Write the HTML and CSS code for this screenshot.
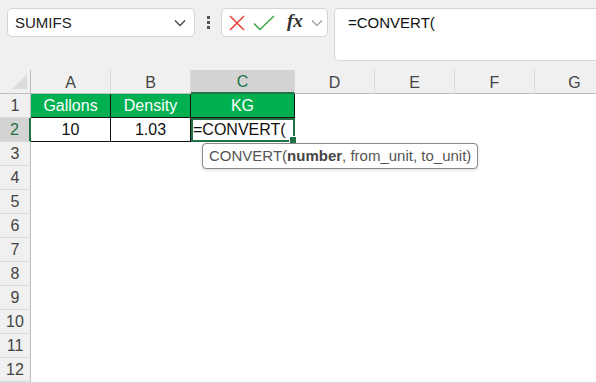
FILE: index.html
```html
<!DOCTYPE html>
<html lang="en">
<head>
  <meta charset="UTF-8">
  <title>CONVERT</title>
  <link rel="stylesheet" href="styles.css">
</head>
<body>

<header class="bar">
  <div class="namebox">
    <span>SUMIFS</span>
    <svg class="chev" width="12" height="8" viewBox="0 0 12 8"><path d="M1 1.5l5 5 5-5" fill="none" stroke="#444" stroke-width="1.3"/></svg>
  </div>
  <div class="dots"><i></i><i></i><i></i></div>
  <div class="fxbox">
    <svg width="16" height="16" viewBox="0 0 16 16"><path d="M1 1l14 14M15 1L1 15" stroke="#e8453c" stroke-width="1.6" fill="none"/></svg>
    <svg width="22" height="16" viewBox="0 0 22 16"><path d="M1 8.5l6 6L21 1" stroke="#3ea84a" stroke-width="1.6" fill="none"/></svg>
    <span class="fx">fx</span>
    <svg width="12" height="8" viewBox="0 0 12 8"><path d="M1 1.5l5 5 5-5" fill="none" stroke="#999" stroke-width="1.2"/></svg>
  </div>
  <div class="formula">=CONVERT(</div>
</header>

<section class="sheet">
  <div class="corner"><span></span></div>
  <div class="colh">A</div>
  <div class="colh">B</div>
  <div class="colh active">C</div>
  <div class="colh">D</div>
  <div class="colh">E</div>
  <div class="colh">F</div>
  <div class="colh">G</div>

  <div class="rowh">1</div>
  <div class="cell head">Gallons</div>
  <div class="cell head">Density</div>
  <div class="cell head">KG</div>
  <div class="cell"></div><div class="cell"></div><div class="cell"></div><div class="cell"></div>

  <div class="rowh active">2</div>
  <div class="cell data">10</div>
  <div class="cell data">1.03</div>
  <div class="cell sel">=CONVERT(
    <div class="tip">CONVERT(<b>number</b>, from_unit, to_unit)</div>
  </div>
  <div class="cell"></div><div class="cell"></div><div class="cell"></div><div class="cell"></div>
</section>

<script>
  // fill remaining empty rows
  const sheet = document.querySelector('.sheet');
  for (let r = 3; r <= 12; r++) {
    const h = document.createElement('div');
    h.className = 'rowh';
    h.textContent = r;
    sheet.appendChild(h);
    for (let c = 0; c < 7; c++) {
      const d = document.createElement('div');
      d.className = 'cell';
      sheet.appendChild(d);
    }
  }
</script>

</body>
</html>
```

FILE: styles.css
```css
* { box-sizing: border-box; }
body { margin: 0; font-family: "Liberation Sans", Arial, sans-serif; background: #fff; overflow: hidden; }

.bar { background: #f0f0f0; height: 70px; display: flex; align-items: flex-start; padding: 8px 0 0 7px; }
.namebox {
  width: 188px; height: 29px; background: #fff; border: 1px solid #d4d4d4; border-radius: 5px;
  display: flex; align-items: center; justify-content: space-between; padding: 0 8px 0 7px;
  font-size: 15px; color: #222;
}
.dots { width: 26px; height: 29px; display: flex; flex-direction: column; align-items: center; justify-content: center; gap: 2px; }
.dots i { width: 3px; height: 3px; background: #555; display: block; }
.fxbox {
  width: 107px; height: 29px; background: #fff; border: 1px solid #d4d4d4; border-radius: 5px;
  display: flex; align-items: center; gap: 8px; padding: 0 4px 0 7px;
}
.fxbox .fx { font-family: "Liberation Serif", serif; font-style: italic; font-weight: bold; font-size: 19px; color: #333; margin: -3px 0 0 4px; }
.formula {
  flex: 1; margin-left: 6px; height: 53px; background: #fff; border: 1px solid #d4d4d4; border-right: none;
  border-radius: 5px 0 0 5px; padding: 5px 0 0 13px; font-size: 15px; color: #111;
}

.sheet { display: grid; grid-template-columns: 31px 80px 80px 104px 80px 80px 80px 80px; grid-auto-rows: 24px; border-bottom: 1px solid #dadada; }
.corner, .colh { background: #f0f0f0; border-bottom: 1px solid #bdbdbd; border-right: 1px solid #dadada; }
.corner { border-right: 1px solid #bdbdbd; position: relative; }
.corner span {
  position: absolute; right: 3px; bottom: 4px; width: 0; height: 0;
  border-left: 15px solid transparent; border-bottom: 15px solid #dcdcdc;
}
.colh { display: flex; align-items: center; justify-content: center; font-size: 16px; color: #444; padding-top: 2px; }
.colh.active { background: #d3d3d3; color: #217346; border-bottom: 2px solid #217346; }
.rowh {
  background: #f0f0f0; border-right: 1px solid #bdbdbd; border-bottom: 1px solid #dadada;
  display: flex; align-items: center; justify-content: center; font-size: 16px; color: #444;
}
.rowh.active { background: #d3d3d3; color: #217346; border-right: 2px solid #217346; }

.cell { font-size: 16px; display: flex; align-items: center; justify-content: center; color: #111; }
.cell.head { background: #00b050; color: #fff; border-right: 1px solid #111; border-bottom: 1px solid #111; }
.cell.data { border-right: 1px solid #111; border-bottom: 1px solid #111; }
.cell.data:first-of-type { border-left: 1px solid #111; }
.cell.sel { justify-content: flex-start; border: 2px solid #217346; padding-left: 0; position: relative; }
.cell.sel::after {
  content: ""; position: absolute; right: -4px; bottom: -4px; width: 6px; height: 6px;
  background: #217346; border: 1px solid #fff;
}
.tip {
  position: absolute; left: 9px; top: 23px; white-space: nowrap; z-index: 2;
  background: #fff; border: 1px solid #8a8a8a; border-radius: 4px; padding: 3px 6px 4px 6px;
  font-size: 15px; color: #555; box-shadow: 0 1px 3px rgba(0,0,0,0.15);
}
.tip b { color: #444; }
```
